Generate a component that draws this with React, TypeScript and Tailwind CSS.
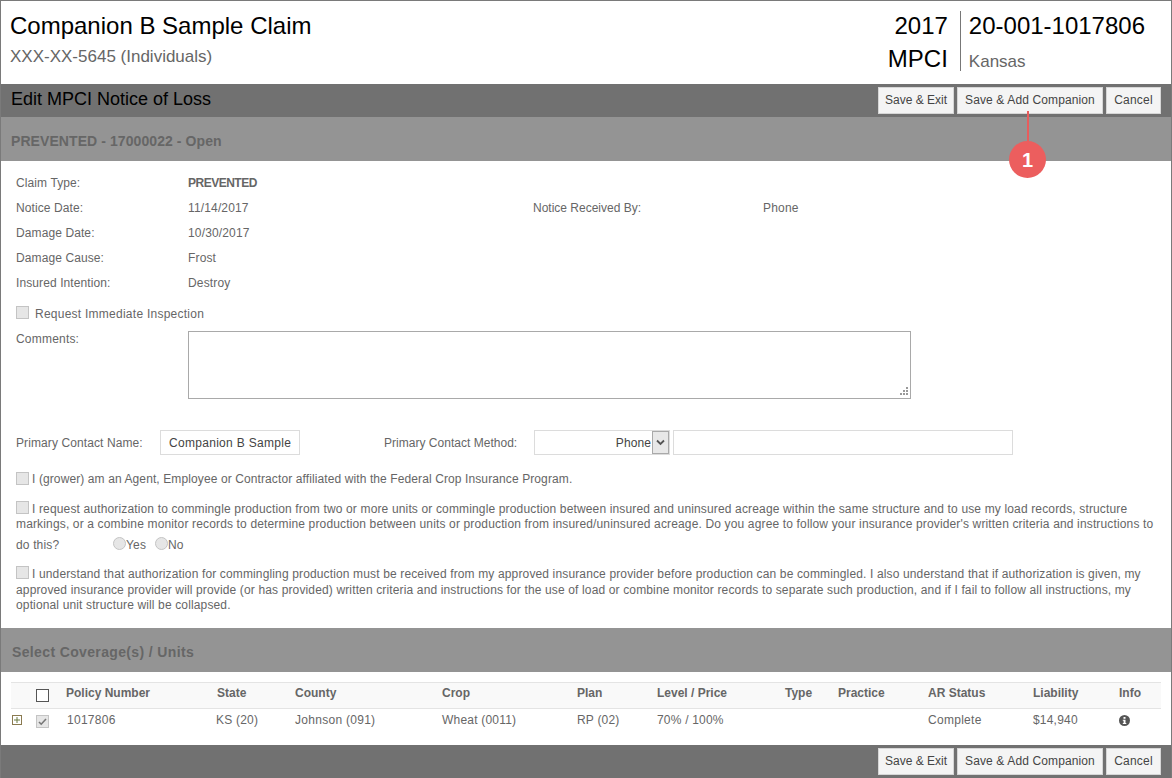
const font = "font-['Liberation_Sans',Arial,sans-serif]";

function ActionButtons() {
  return (
    <div className="flex gap-[3px]">
      <button className="h-[27px] w-[76px] border border-[#d6d6d6] bg-[#f4f4f4] pb-[1px] text-center text-[12px] text-[#444]">Save &amp; Exit</button>
      <button className="h-[27px] w-[146px] border border-[#d6d6d6] bg-[#f4f4f4] pb-[1px] text-center text-[12px] tracking-[0.12px] text-[#444]">Save &amp; Add Companion</button>
      <button className="h-[27px] w-[55px] border border-[#d6d6d6] bg-[#f4f4f4] pb-[1px] text-center text-[12px] tracking-[0.2px] text-[#444]">Cancel</button>
    </div>
  );
}

function Check({ checked = false, className = "" }: { checked?: boolean; className?: string }) {
  return (
    <span className={`inline-flex h-[13px] w-[13px] shrink-0 items-center justify-center border border-[#c4c4c4] bg-[#e6e6e6] ${className}`}>
      {checked && (
        <svg width="9" height="9" viewBox="0 0 9 9" fill="none">
          <path d="M1 5l2.2 2.2L8 2" stroke="#777" strokeWidth="1.6" />
        </svg>
      )}
    </span>
  );
}

function Radio({ label }: { label: string }) {
  return (
    <span className="flex items-center">
      <span className="mb-[4px] h-[13px] w-[13px] rounded-full border border-[#c4c4c4] bg-[#e6e6e6]" />
      {label}
    </span>
  );
}

function Row({ label, value, bold = false, children }: { label: string; value: string; bold?: boolean; children?: React.ReactNode }) {
  return (
    <div className="flex h-[25px] items-center">
      <span className="w-[172px] tracking-[0.1px]">{label}</span>
      <span className={`w-[345px] ${bold ? "font-bold tracking-[-0.5px]" : "tracking-[0.15px]"}`}>{value}</span>
      {children}
    </div>
  );
}

const columns = "grid grid-cols-[25px_30px_151px_78px_147px_135px_80px_128px_53px_90px_105px_86px_auto]";

export default function App() {
  return (
    <div className={`${font} flex h-[778px] w-[1172px] flex-col overflow-hidden border-x border-t border-[#7a7a7a] bg-white text-[12px] text-[#666]`}>
      <header className="flex h-[83px] shrink-0 justify-between pl-[9px] pr-[26px]">
        <div>
          <h1 className="mt-[10px] text-[24px] leading-[30px] text-black">Companion B Sample Claim</h1>
          <p className="mt-[5px] text-[17px] leading-[22px] text-[#666]">XXX-XX-5645 (Individuals)</p>
        </div>
        <div className="mt-[10px] flex h-[60px]">
          <div className="border-r border-[#777] pr-[12px] text-right text-[24px] text-black">
            <div className="leading-[30px]">2017</div>
            <div className="mt-[5px] leading-[25px]">MPCI</div>
          </div>
          <div className="pl-[8px]">
            <div className="text-[24px] leading-[30px] text-black">20-001-1017806</div>
            <div className="mt-[10px] text-[17px] leading-[22px] text-[#666]">Kansas</div>
          </div>
        </div>
      </header>

      <div className="relative flex h-[33px] shrink-0 items-center justify-between bg-[#717171] pl-[10px] pr-[10px]">
        <span className="-mt-[2px] text-[18px] text-black">Edit MPCI Notice of Loss</span>
        <ActionButtons />
        {/* callout marker over the button */}
        <div className="absolute left-[1008px] top-[27px] flex flex-col items-center">
          <span className="h-[31px] w-[2px] bg-[#e85c5c]" />
          <span className="-mt-[1px] flex h-[37px] w-[37px] items-center justify-center rounded-full bg-[#ec5e5e] text-[20px] font-bold text-white">1</span>
        </div>
      </div>

      <div className="flex h-[44px] shrink-0 items-center bg-[#949494] pl-[10px] pt-[4px] text-[14px] font-bold tracking-[0.08px] text-[#666]">PREVENTED - 17000022 - Open</div>

      <main className="flex flex-1 flex-col pl-[15px] pt-[9px]">
        <Row label="Claim Type:" value="PREVENTED" bold />
        <Row label="Notice Date:" value="11/14/2017">
          <span className="w-[230px]">Notice Received By:</span>
          <span className="tracking-[0.2px]">Phone</span>
        </Row>
        <Row label="Damage Date:" value="10/30/2017" />
        <Row label="Damage Cause:" value="Frost" />
        <Row label="Insured Intention:" value="Destroy" />

        <label className="mt-[11px] flex h-[16px] items-center tracking-[0.25px]">
          <Check className="mb-[3px] mr-[6px]" />
          Request Immediate Inspection
        </label>

        <div className="mt-[9px] flex">
          <span className="-mt-[1px] w-[172px] tracking-[0.2px]">Comments:</span>
          <div className="relative h-[68px] w-[723px] border border-[#a9a9a9]">
            <svg className="absolute bottom-[1px] right-[1px]" width="11" height="11" viewBox="0 0 11 11" fill="#999">
              <rect x="8" y="1" width="2" height="2" />
              <rect x="5" y="4" width="2" height="2" />
              <rect x="8" y="4" width="2" height="2" />
              <rect x="2" y="7" width="2" height="2" />
              <rect x="5" y="7" width="2" height="2" />
              <rect x="8" y="7" width="2" height="2" />
            </svg>
          </div>
        </div>

        <div className="mt-[31px] flex h-[25px] items-center">
          <span className="w-[144px] tracking-[0.1px]">Primary Contact Name:</span>
          <div className="flex h-[25px] w-[140px] items-center border border-[#dcdcdc] pl-[8px] tracking-[0.3px] text-[#444]">
            <span className="w-[126px] overflow-hidden whitespace-nowrap">Companion B Sample</span>
          </div>
          <span className="ml-[84px] w-[150px] tracking-[0.02px]">Primary Contact Method:</span>
          <div className="flex h-[25px] w-[136px] items-center justify-end border border-[#dcdcdc] tracking-[0.1px] text-[#444]">
            Phone
            <span className="ml-[1px] flex h-[23px] w-[17px] items-center justify-center border border-[#a9a9a9] bg-[#e8e8e8]">
              <svg width="9" height="7" viewBox="0 0 9 7" fill="none">
                <path d="M1 1.5l3.5 3.5L8 1.5" stroke="#555" strokeWidth="1.8" />
              </svg>
            </span>
          </div>
          <div className="ml-[3px] h-[25px] w-[340px] border border-[#dcdcdc]" />
        </div>

        <p className="mt-[16px] flex h-[16px] items-center tracking-[0.105px]">
          <Check className="mb-[2px] mr-[3px]" />I (grower) am an Agent, Employee or Contractor affiliated with the Federal Crop Insurance Program.
        </p>

        <div className="mt-[14px] w-[1142px] leading-[15px] tracking-[0.15px]">
          <Check className="mr-[3px] align-[-1px]" />I request authorization to commingle production from two or more units or commingle production between insured and uninsured acreage within the same structure and to use my load records, structure markings, or a combine monitor records to determine production between units or production from insured/uninsured acreage. Do you agree to follow your insurance provider's written criteria and instructions to
          <div className="mt-[4px] flex h-[18px] items-center">
            <span className="w-[97px]">do this?</span>
            <Radio label="Yes" />
            <span className="ml-[9px]"><Radio label="No" /></span>
          </div>
        </div>

        <div className="mt-[12px] w-[1142px] leading-[15.5px] tracking-[0.14px]">
          <Check className="mr-[3px] align-[-1px]" />I understand that authorization for commingling production must be received from my approved insurance provider before production can be commingled. I also understand that if authorization is given, my approved insurance provider will provide (or has provided) written criteria and instructions for the use of load or combine monitor records to separate such production, and if I fail to follow all instructions, my optional unit structure will be collapsed.
        </div>
      </main>

      <div className="flex h-[44px] shrink-0 items-center bg-[#949494] pl-[11px] pt-[4px] text-[14px] font-bold tracking-[0.36px] text-[#666]">Select Coverage(s) / Units</div>

      <section className="h-[73px] shrink-0 pl-[10px] pr-[10px] pt-[10px]">
        <div className={`${columns} h-[27px] items-center border-y border-[#e4e4e4] bg-[#f9f9f9] font-bold`}>
          <span />
          <span className="h-[13px] w-[13px] border border-[#555] bg-white" />
          <span className="-mt-[6px]">Policy Number</span>
          <span className="-mt-[6px]">State</span>
          <span className="-mt-[6px]">County</span>
          <span className="-mt-[6px]">Crop</span>
          <span className="-mt-[6px]">Plan</span>
          <span className="-mt-[6px]">Level / Price</span>
          <span className="-mt-[6px]">Type</span>
          <span className="-mt-[6px]">Practice</span>
          <span className="-mt-[6px]">AR Status</span>
          <span className="-mt-[6px]">Liability</span>
          <span className="-mt-[6px]">Info</span>
        </div>
        <div className={`${columns} h-[24px] items-center tracking-[0.2px]`}>
          <span className="-mt-[3px] ml-[1px] flex h-[10px] w-[10px] items-center justify-center border border-[#8a7a50] text-[#6b6b50]">
            <svg width="8" height="8" viewBox="0 0 8 8" fill="none">
              <path d="M4 1v6M1 4h6" stroke="#6b7a40" />
            </svg>
          </span>
          <Check checked />
          <span className="-mt-[2px] ml-[1px] tracking-[0.28px]">1017806</span>
          <span className="-mt-[2px] -ml-[1px]">KS (20)</span>
          <span className="-mt-[2px] tracking-[0.28px]">Johnson (091)</span>
          <span className="-mt-[2px]">Wheat (0011)</span>
          <span className="-mt-[2px]">RP (02)</span>
          <span className="-mt-[2px]">70% / 100%</span>
          <span />
          <span />
          <span className="-mt-[2px] tracking-[0.28px]">Complete</span>
          <span className="-mt-[2px]">$14,940</span>
          <svg className="-mt-[2px]" width="11" height="11" viewBox="0 0 11 11">
            <circle cx="5.5" cy="5.5" r="5.5" fill="#555" />
            <rect x="4.5" y="2" width="2" height="1.8" fill="#fff" />
            <path d="M3.8 4.7h2.7v3.4h.8v1H3.8v-1h.8V5.7h-.8z" fill="#fff" />
          </svg>
        </div>
      </section>

      <footer className="flex h-[33px] shrink-0 items-center justify-end bg-[#717171] pr-[10px]">
        <ActionButtons />
      </footer>
    </div>
  );
}
